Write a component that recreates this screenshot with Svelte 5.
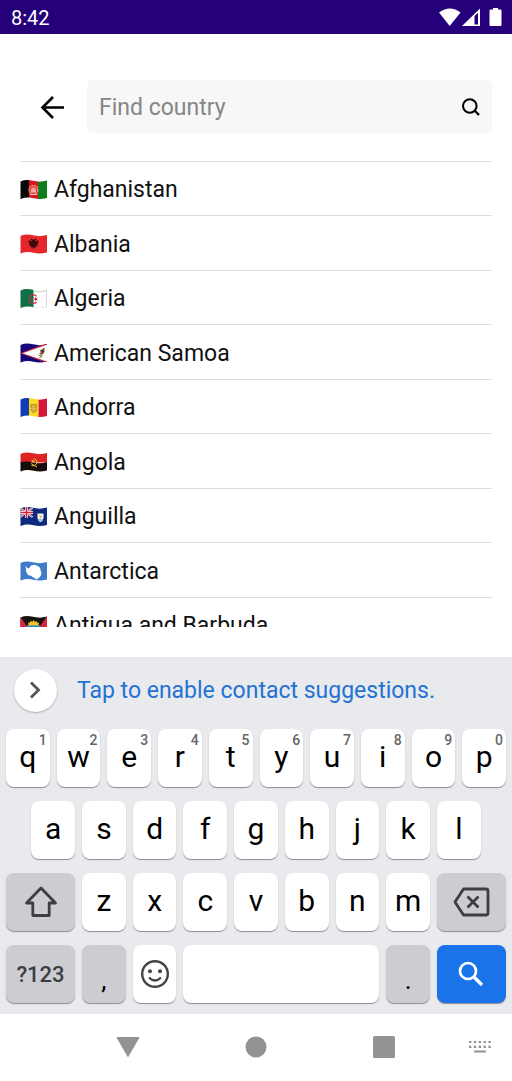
<script>
  const countries = [
    {
      name: 'Afghanistan',
      flag: `<path fill="#060606" d="M0 0h9v20H0z"/><path fill="#d8181c" d="M9 0h9v20H9z"/><path fill="#0b7d1a" d="M18 0h9v20h-9z"/>
        <circle cx="13.5" cy="10" r="4.6" fill="#e2453f" stroke="#f09a90" stroke-width="1.1" stroke-dasharray="2 .7"/>
        <path d="M11 12.500V9.500l2.500-2.500 2.500 2.500v3z" fill="#f3aaa0"/><path d="M10 14.500h7" stroke="#f7c0b8"/>`,
    },
    {
      name: 'Albania',
      flag: `<path fill="#e5262b" d="M0 0h27v20H0z"/>
        <path fill="#3b090a" d="M13.500 6l-2-1.500-1 1.200 1.300.8-.6 1L8.500 6l.3 3 .8 1.500L9 12l2.300-.3-.6 2 1.700-.6 1.100 2.400 1.100-2.400 1.700.6-.6-2 2.300.3-.6-1.500.8-1.500.3-3-2.700 1.500-.6-1 1.300-.8-1-1.200z"/>`,
    },
    {
      name: 'Algeria',
      flag: `<path fill="#fdfdfd" d="M0 0h27v20H0z"/><path fill="#0e7044" d="M0 0h13.500v20H0z"/>
        <path d="M16.500 7.200a4.200 4.200 0 1 0 0 5.800" fill="none" stroke="#d4283c" stroke-width="1.300"/>
        <path fill="#d4283c" d="M13 10.100l1.900-.6.1-1.800 1.100 1.500 1.800-.6-1.100 1.500 1.100 1.500-1.800-.6-1.100 1.500-.1-1.800z"/>
        <path d="M13.500 2.100C18 3 22 2.800 26.700 1.400v16.700c-4.700 1.500-8.700 1.700-13.200.4" fill="none" stroke="#bcc0bd" stroke-width=".8"/>`,
    },
    {
      name: 'American Samoa',
      flag: `<path fill="#16077a" d="M0 0h27v20H0z"/><path fill="#c6283c" d="M0 10.200L27 0v20z"/><path fill="#fff" d="M2.500 10.200L27 1.800v16.700z"/>
        <path fill="#80502a" d="M20 7.500l2.500-1.500 2-1.700v4.500l-1.200 2.200-3.300.6-.7-1.500 1.600-.7z"/><path d="M18.500 12.500l3.700-.7M19.500 15l3-3" stroke="#a28b4d" stroke-width="1.200"/><path d="M21 7.500l3 1.500" stroke="#301f19"/>`,
    },
    {
      name: 'Andorra',
      flag: `<path fill="#123cb5" d="M0 0h9v20H0z"/><path fill="#fadb1e" d="M9 0h9.500v20H9z"/><path fill="#d51739" d="M18.500 0H27v20h-8.500z"/>
        <path d="M11 6.500h5.500v5.500q-.5 2-2.700 2.700Q11.500 14 11 12z" fill="#d3a43a" stroke="#b3882b" stroke-width=".8"/><path d="M13.700 7v7M11 10.500h5.500" stroke="#e9c75e" stroke-width=".8"/>`,
    },
    {
      name: 'Angola',
      flag: `<path fill="#dd2424" d="M0 0h27v10.500H0z"/><path fill="#160d0b" d="M0 10.300q6-1.600 13 .2t14-.4V20H0z"/>
        <path d="M14.500 6.500q4 2 2 5.500-2 2.800-5 1.700M11 11.500l6 3.500" fill="none" stroke="#efc52d"/><path fill="#efc52d" d="M13 7l.5 1.500H15l-1.200 1 .5 1.500-1.300-.9-1.300.9.5-1.500-1.200-1h1.500z"/>`,
    },
    {
      name: 'Anguilla',
      flag: `<path fill="#0d2a7e" d="M0 0h27v20H0z"/>
        <path d="M0 1l12.500 9M12.500 1L0 10" stroke="#fff" stroke-width="2"/><path d="M0 1l12.500 9M12.500 1L0 10" stroke="#d32639" stroke-width=".8"/>
        <path d="M6.500 0v11M0 5.500h13" stroke="#fff" stroke-width="3"/><path d="M6.500 0v11M0 5.500h13" stroke="#d32639" stroke-width="1.700"/>
        <path fill="#f5f5f0" d="M17.500 6.500h6V11q-.4 3-3 4.300-2.600-1.300-3-4.300z"/><path fill="#7fbfdc" d="M18 12h5q-.7 1.800-2.500 2.700Q18.700 13.800 18 12z"/><path d="M19.300 8.500l2.500 1-2 1.800" fill="none" stroke="#e39a37"/>`,
    },
    {
      name: 'Antarctica',
      flag: `<path fill="#3f7bc9" d="M0 0h27v20H0z"/>
        <path fill="#fff" d="M5.500 5l2.200 2.300 1.500-.2L11 4.500l3-.8 3.500 1 2.500 2 .8 3 .6 2.200-.4 2-1.400 2.300-2 1.800-2 .2-1-1.500-1.700-.4-1.800-1.500-2.700-.6-1.500-2-.8-2L6 8z"/>`,
    },
    {
      name: 'Antigua and Barbuda',
      flag: `<path fill="#151310" d="M0 0h27v20H0z"/><path fill="#f4c62c" d="M7 10l1.500-1.300L8 6.500l2 .2.600-2 1.600 1.200L13.500 4l1.300 1.900 1.600-1.200.6 2 2-.2-.5 2.200L20 10z"/>
        <path fill="#1688cf" d="M5 9.500h17V14H5z"/><path fill="#fff" d="M7 14h13l-6.500 6z"/><path fill="#d8213b" d="M0 0l13.500 20H0zM27 0L13.500 20H27z"/>`,
    },
  ]

  const topRow = [...'qwertyuiop']
  const homeRow = [...'asdfghjkl']
  const bottomRow = [...'zxcvbnm']

  let search = $state('')
  let shown = $derived(
    countries.filter(({ name }) => name.toLowerCase().startsWith(search.toLowerCase()))
  )

  const press = letter => {
    search += letter
  }
  const erase = () => {
    search = search.slice(0, -1)
  }
</script>

<div class="screen">
  <div class="status">
    <span>8:42</span>
    <svg width="64" height="20" viewBox="0 0 64 20" fill="#fff" aria-hidden="true">
      <path d="M0 4.500Q11 -3.500 21.500 4.500L10.700 18z" />
      <path d="M23 18L41 .5V18zM35.500 8v8.500h3.500V4.700z" fill-rule="evenodd" />
      <path d="M54 0h5v1.500h2.500q1 0 1 1V17q0 1-1 1h-10q-1 0-1-1V2.500q0-1 1-1H54z" />
    </svg>
  </div>

  <header>
    <button class="back" aria-label="Back">
      <svg width="24" height="24" viewBox="0 0 24 24" fill="none" stroke="#000" stroke-width="2.600">
        <path d="M24 12.500H3M13 2L2.500 12.500 13 23" />
      </svg>
    </button>
    <div class="search">
      <input type="text" bind:value={search} placeholder="Find country" aria-label="Find country" />
      <button aria-label="Search">
        <svg width="18" height="18" viewBox="0 0 18 18" fill="none" stroke="#000" stroke-width="2">
          <circle cx="7.800" cy="8" r="6.800" />
          <path d="M12.500 12.500l4.500 4.500" stroke-width="2.400" />
        </svg>
      </button>
    </div>
  </header>

  <ul class="countries">
    {#each shown as { name, flag } (name)}
      <li>
        <button>
          <svg class="flag" width="27" height="20" viewBox="0 0 27 20" aria-hidden="true">{@html flag}</svg>
          {name}
        </button>
      </li>
    {/each}
  </ul>

  <div class="keyboard">
    <div class="suggestions">
      <button class="expand" aria-label="Expand">
        <svg width="12" height="18" viewBox="0 0 12 18" fill="none" stroke="#555" stroke-width="2.800">
          <path d="M1 1.500L8.500 9 1 16.500" />
        </svg>
      </button>
      <a href="#contacts">Tap to enable contact suggestions.</a>
    </div>

    <div class="keys">
      {#each topRow as letter, i}
        <button class="key" onclick={() => press(letter)}>
          {letter}<sup>{(i + 1) % 10}</sup>
        </button>
      {/each}
      {#each homeRow as letter}
        <button class="key" class:indent={letter === 'a'} onclick={() => press(letter)}>{letter}</button>
      {/each}
      <button class="key wide grey row-start" aria-label="Shift">
        <svg width="34" height="32" viewBox="0 0 34 32" fill="none" stroke="#3c3e43" stroke-width="2.800" stroke-linejoin="round">
          <path d="M17 2L2.500 17h6.300v12.500h16.400V17h6.300z" />
        </svg>
      </button>
      {#each bottomRow as letter}
        <button class="key" onclick={() => press(letter)}>{letter}</button>
      {/each}
      <button class="key wide grey" aria-label="Delete" onclick={erase}>
        <svg width="37" height="30" viewBox="0 0 37 30" fill="none" stroke="#3c3e43" stroke-width="2.800" stroke-linejoin="round">
          <path d="M10.500 2h22.500q2 0 2 2v22q0 2-2 2H10.500L2 15z" />
          <path d="M14.500 9.500l11 11M25.500 9.500l-11 11" />
        </svg>
      </button>
      <button class="key wide grey symbols">?123</button>
      <button class="key grey mark" onclick={() => press(',')}>,</button>
      <button class="key emoji" aria-label="Emoji">
        <svg width="30" height="30" viewBox="0 0 30 30" fill="none" stroke="#444" stroke-width="2.400">
          <circle cx="15" cy="15" r="12.800" />
          <path d="M9 18.500q6 6 12 0" />
          <circle cx="10" cy="12.300" r="2" fill="#444" stroke="none" />
          <circle cx="20" cy="12.300" r="2" fill="#444" stroke="none" />
        </svg>
      </button>
      <button class="key space" aria-label="Space" onclick={() => press(' ')}></button>
      <button class="key grey mark" onclick={() => press('.')}>.</button>
      <button class="key wide blue" aria-label="Search">
        <svg width="26" height="26" viewBox="0 0 26 26" fill="none" stroke="#fff" stroke-width="2.700">
          <circle cx="10" cy="10" r="8" />
          <path d="M15.500 15.500l8.500 8.500" stroke-width="3.400" />
        </svg>
      </button>
    </div>
  </div>

  <nav>
    <button class="first" aria-label="Back">
      <svg width="24" height="22" viewBox="0 0 24 22" fill="#939393">
        <path d="M1.500 1h21q1.200 0 .6 1.200L12.700 20.300q-.7 1.200-1.400 0L.9 2.200Q.3 1 1.500 1z" />
      </svg>
    </button>
    <button aria-label="Home">
      <svg width="22" height="22" viewBox="0 0 22 22" fill="#939393"><circle cx="11" cy="11" r="10.500" /></svg>
    </button>
    <button aria-label="Recent apps">
      <svg width="22" height="22" viewBox="0 0 22 22" fill="#939393"><rect width="22" height="22" rx="1.500" /></svg>
    </button>
    <button aria-label="Switch keyboard">
      <svg width="22" height="14" viewBox="0 0 22 14" fill="none" stroke="#939393" stroke-width="2.200">
        <path d="M0 2h22M0 6.800h22" stroke-dasharray="2.400 2.450" />
        <path d="M5 11.500h12" stroke-width="2" />
      </svg>
    </button>
  </nav>
</div>

<style>
  :global(body) {
    margin: 0;
    background: #fff;
  }
  .screen {
    display: flex;
    flex-direction: column;
    height: 100vh;
    font-family: Roboto, 'Liberation Sans', sans-serif;
    color: #111;
  }
  button {
    display: flex;
    align-items: center;
    justify-content: center;
    margin: 0;
    padding: 0;
    border: 0;
    background: none;
    color: inherit;
    font: inherit;
  }
  svg {
    display: block;
    flex: none;
  }
  .status {
    display: flex;
    align-items: center;
    justify-content: space-between;
    box-sizing: border-box;
    flex: none;
    height: 34px;
    padding: 2px 9px 0 11px;
    background: #26007b;
    color: #fff;
    font-size: 20px;
  }
  header {
    display: flex;
    align-items: center;
    padding: 46px 20px 28px 40px;
  }
  .back {
    width: 24px;
    margin-right: 23px;
  }
  .search {
    display: flex;
    align-items: center;
    flex: 1;
    height: 53px;
    padding: 0 12px;
    border-radius: 6px;
    background: #f7f7f7;
  }
  input {
    flex: 1;
    min-width: 0;
    padding: 2px 0 0;
    border: 0;
    outline: 0;
    background: none;
    color: #111;
    font: inherit;
    font-size: 23px;
  }
  input::placeholder {
    color: #868686;
    opacity: 1;
  }
  .countries {
    flex: 1;
    min-height: 0;
    margin: 0 20px 30px;
    padding: 0;
    overflow: hidden;
    list-style: none;
    font-size: 23px;
  }
  li {
    box-sizing: border-box;
    height: 54px;
    border-top: 1px solid #dedede;
  }
  li:nth-child(even) {
    height: 55px;
  }
  li button {
    justify-content: flex-start;
    gap: 7px;
    width: 100%;
    height: 100%;
    padding-top: 2px;
  }
  .flag {
    clip-path: path('M0.500 2Q6 -0.500 13 1.300T27 1V18.500Q20 20.500 13.500 18.800T0.500 19.500Z');
  }
  .keyboard {
    flex: none;
    padding-bottom: 11px;
    background: #e8eaed;
  }
  .suggestions {
    display: flex;
    align-items: center;
    gap: 20px;
    height: 66px;
    padding: 0 14px 6px;
    font-size: 23px;
  }
  .expand {
    width: 43px;
    height: 43px;
    border-radius: 50%;
    background: #fff;
    box-shadow: 0 1px 2px #0004;
  }
  a {
    color: #2472d3;
    text-decoration: none;
  }
  .keys {
    display: grid;
    grid-template-columns: repeat(20, 1fr);
    grid-auto-rows: 58px;
    gap: 14px 7px;
    padding: 0 6px;
  }
  .key {
    position: relative;
    grid-column: span 2;
    padding-bottom: 4px;
    border-radius: 8px;
    background: #fff;
    box-shadow: 0 1px 1px #0006;
    color: #000;
    font-size: 30px;
  }
  .indent {
    grid-column: 2 / span 2;
  }
  .wide {
    grid-column: span 3;
    padding-bottom: 0;
  }
  .emoji {
    padding-bottom: 0;
  }
  .row-start {
    grid-column: 1 / span 3;
  }
  .space {
    grid-column: span 8;
  }
  .grey {
    background: #cccdd2;
  }
  .blue {
    background: #1a73e8;
  }
  .symbols {
    color: #3c3e43;
    font-size: 22px;
    font-weight: 500;
  }
  .mark {
    align-items: flex-end;
    padding-bottom: 8px;
    font-size: 26px;
  }
  sup {
    position: absolute;
    top: 3px;
    right: 3px;
    color: #666;
    font-size: 14px;
    font-weight: 500;
    line-height: 16px;
  }
  nav {
    display: grid;
    grid-template-columns: 1fr 2fr 2fr 2fr 1fr;
    box-sizing: border-box;
    flex: none;
    height: 67px;
    padding-bottom: 2px;
    background: #fff;
  }
  .first {
    grid-column: 2;
  }
</style>
